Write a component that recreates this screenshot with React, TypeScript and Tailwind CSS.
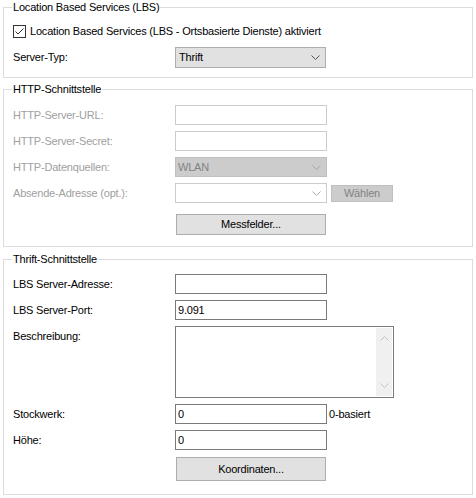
import React from "react";

// Windows-dialog style settings page: three group boxes with label/control rows.
const FONT = "font-['Liberation_Sans',Arial,sans-serif] text-[11px] tracking-[-0.2px]";

function Chevron({ down = true, className = "" }: { down?: boolean; className?: string }) {
  return (
    <svg width="9" height="5" viewBox="0 0 9 5" className={className}>
      <polyline
        points={down ? "0.5,0.5 4.5,4.5 8.5,0.5" : "0.5,4.5 4.5,0.5 8.5,4.5"}
        fill="none"
        stroke="currentColor"
        strokeWidth="1"
      />
    </svg>
  );
}

function Group({
  title,
  children,
  className = "",
}: {
  title: string;
  children: React.ReactNode;
  className?: string;
}) {
  return (
    <fieldset className={`border border-[#dcdcdc] px-[9px] ${className}`}>
      <legend className="-ml-[1px] px-[1px] leading-[14px] text-black">{title}</legend>
      {children}
    </fieldset>
  );
}

function Row({
  label,
  disabled = false,
  children,
  className = "",
}: {
  label: string;
  disabled?: boolean;
  children: React.ReactNode;
  className?: string;
}) {
  return (
    <div className={`flex items-start ${className}`}>
      <span
        className={`w-[162px] shrink-0 leading-[20px] ${
          disabled ? "text-[#a0a0a0]" : "text-black"
        }`}
      >
        {label}
      </span>
      {children}
    </div>
  );
}

function TextBox({ value = "", disabled = false }: { value?: string; disabled?: boolean }) {
  return (
    <div
      className={`flex h-[20px] w-[152px] items-center border bg-white px-[2px] text-black ${
        disabled ? "border-[#cccccc]" : "border-[#7a7a7a]"
      }`}
    >
      {value}
    </div>
  );
}

function Button({ label, className = "" }: { label: string; className?: string }) {
  return (
    <div
      className={`flex w-[150px] items-center justify-center border border-[#adadad] bg-[#e1e1e1] text-black ${className}`}
    >
      {label}
    </div>
  );
}

export default function App() {
  return (
    <div className={`${FONT} flex h-[498px] w-[476px] flex-col gap-[4px] bg-white px-[3px]`}>
      <Group title="Location Based Services (LBS)" className="h-[78px]">
        <label className="mt-[11px] flex items-center gap-[4px] leading-[13px] text-black">
          <span className="flex h-[13px] w-[13px] items-center justify-center border border-[#333333] bg-white">
            <svg width="9" height="7" viewBox="0 0 9 7">
              <polyline points="0.5,3.5 3,6 8.5,0.5" fill="none" stroke="#333333" strokeWidth="1" />
            </svg>
          </span>
          Location Based Services (LBS - Ortsbasierte Dienste) aktiviert
        </label>
        <Row label="Server-Typ:" className="mt-[9px]">
          <div className="flex h-[21px] w-[151px] items-center justify-between border border-[#adadad] bg-[#e1e1e1] pl-[3px] pr-[5px] text-black">
            Thrift
            <Chevron className="text-[#555555]" />
          </div>
        </Row>
      </Group>

      <Group title="HTTP-Schnittstelle" className="h-[165px]">
        <div className="mt-[9px] flex flex-col gap-[6px]">
          <Row label="HTTP-Server-URL:" disabled>
            <TextBox disabled />
          </Row>
          <Row label="HTTP-Server-Secret:" disabled>
            <TextBox disabled />
          </Row>
          <Row label="HTTP-Datenquellen:" disabled>
            <div className="flex h-[20px] w-[152px] items-center justify-between border border-[#bfbfbf] bg-[#cccccc] pl-[2px] pr-[5px] text-[#838383]">
              WLAN
              <Chevron className="text-[#a8a8a8]" />
            </div>
          </Row>
          <Row label="Absende-Adresse (opt.):" disabled>
            <div className="flex h-[20px] w-[152px] items-center justify-end border border-[#cccccc] bg-white pr-[5px]">
              <Chevron className="text-[#a8a8a8]" />
            </div>
            <div className="ml-[4px] mt-[2px] flex h-[17px] w-[62px] items-center justify-center border border-[#bfbfbf] bg-[#cccccc] text-[#838383]">
              Wählen
            </div>
          </Row>
          <div className="flex pl-[163px] pt-[5px]">
            <Button label="Messfelder..." className="h-[21px]" />
          </div>
        </div>
      </Group>

      <Group title="Thrift-Schnittstelle" className="mt-[1px] h-[243px]">
        <div className="mt-[8px] flex flex-col gap-[6px]">
          <Row label="LBS Server-Adresse:">
            <TextBox />
          </Row>
          <Row label="LBS Server-Port:">
            <TextBox value="9.091" />
          </Row>
          <Row label="Beschreibung:">
            <div className="flex h-[72px] w-[219px] justify-end border border-[#7a7a7a] bg-white p-[1px]">
              <div className="flex w-[16px] flex-col items-center justify-between bg-[#f0f0f0] py-[8px] text-[#c2c2c2]">
                <Chevron down={false} />
                <Chevron />
              </div>
            </div>
          </Row>
          <Row label="Stockwerk:">
            <TextBox value="0" />
            <span className="ml-[2px] leading-[20px] text-black">0-basiert</span>
          </Row>
          <Row label="Höhe:">
            <TextBox value="0" />
          </Row>
          <div className="flex pl-[163px] pt-[1px]">
            <Button label="Koordinaten..." className="h-[24px]" />
          </div>
        </div>
      </Group>
    </div>
  );
}
